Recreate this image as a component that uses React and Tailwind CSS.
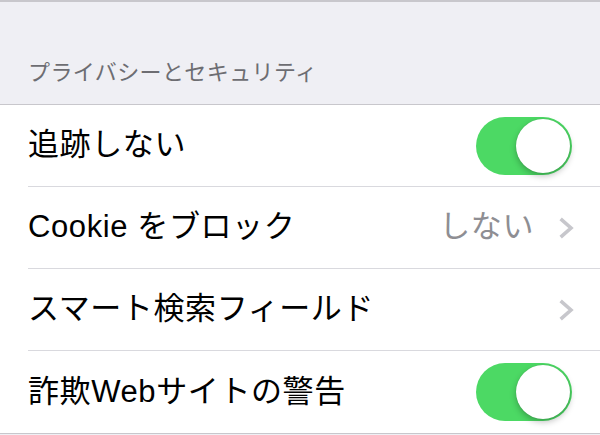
const font = {
  fontFamily: '"Liberation Sans", "Noto Sans CJK JP", sans-serif',
};

const Toggle = () => (
  <div className="relative w-[96px] h-[58px] rounded-full bg-[#4cd964] shrink-0">
    <div className="absolute right-[2px] top-[2px] w-[54px] h-[54px] rounded-full bg-white shadow-[0_3px_6px_rgba(0,0,0,0.25),0_0_1px_rgba(0,0,0,0.2)]" />
  </div>
);

const Chevron = () => (
  <svg width="16" height="22" viewBox="0 0 16 22" className="shrink-0">
    <path d="M4 3 L13 11 L4 19" fill="none" stroke="#c7c7cc" strokeWidth="3.6" strokeLinecap="square" />
  </svg>
);

const Row = ({ label, children, last }) => (
  <div className="pl-[28px]">
    <div className={`h-[82px] flex items-center justify-between pr-[28px] ${last ? "" : "border-b border-[#d9d9de]"}`}>
      <span className="text-[31px] text-black tracking-[0.6px]">{label}</span>
      {children}
    </div>
  </div>
);

export default function App() {
  return (
    <div className="w-[600px] h-[435px] bg-[#efeff4] overflow-hidden" style={font}>
      <div className="h-[104px] border-t-2 border-[#c8c7cc] flex items-end pl-[28px] pb-[15px]">
        <span className="text-[22px] text-[#6d6d72] tracking-[0.4px]">プライバシーとセキュリティ</span>
      </div>
      <div className="bg-white border-t border-b border-[#c8c7cc]">
        <Row label="追跡しない">
          <Toggle />
        </Row>
        <Row label="Cookie をブロック">
          <div className="flex items-center gap-[24px] -mr-[2px]">
            <span className="text-[31px] text-[#8e8e93] tracking-[0.6px]">しない</span>
            <Chevron />
          </div>
        </Row>
        <Row label="スマート検索フィールド">
          <div className="-mr-[2px]">
            <Chevron />
          </div>
        </Row>
        <Row label="詐欺Webサイトの警告" last>
          <Toggle />
        </Row>
      </div>
    </div>
  );
}
